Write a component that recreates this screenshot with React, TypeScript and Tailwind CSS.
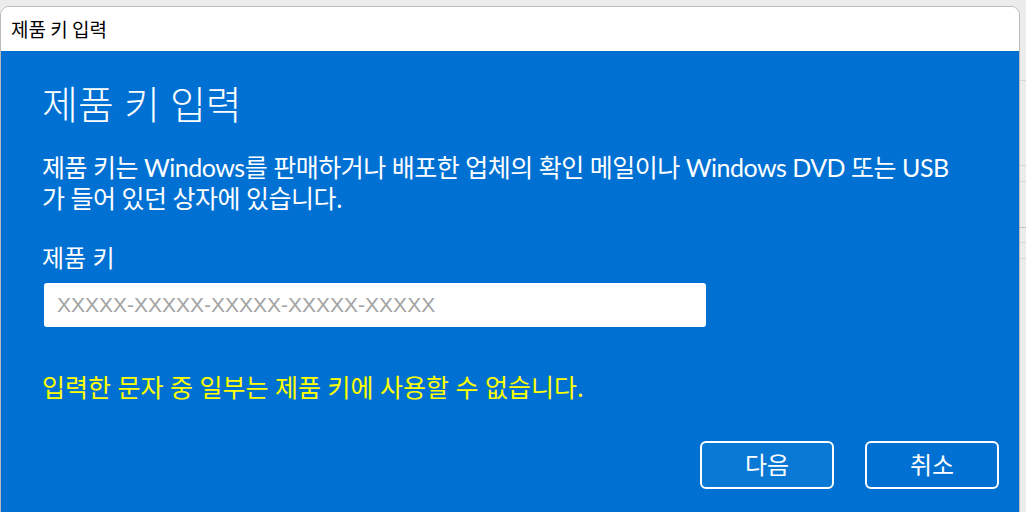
const ko = { fontFamily: '"Noto Sans", "Noto Sans CJK KR", sans-serif' };
const latin = { fontFamily: 'Lato, "Noto Sans", sans-serif' };

export default function App() {
  return (
    <div className="w-[1026px] h-[512px] overflow-hidden bg-[#ececec] pt-[6px] flex">
      <div className="w-[1020px] h-[520px] shrink-0 flex flex-col rounded-tr-[9px] rounded-tl-[9px] border border-[#b9b9b9] overflow-hidden">
        <div className="h-[44px] bg-white flex items-center pl-[10px] text-[19px] text-black" style={{ fontFamily: '"Noto Sans CJK KR", sans-serif' }}>
          제품 키 입력
        </div>
        <div className="flex-1 bg-[#0071d3] text-white pl-[41px] pr-[20px]" style={ko}>
          <h1 className="mt-[29px] text-[39px] font-light leading-[48px] whitespace-nowrap">제품 키 입력</h1>
          <p className="mt-[24px] text-[25px] leading-[31px] tracking-[-0.5px] whitespace-nowrap">
            제품 키는 <span style={latin}>Windows</span>를 판매하거나 배포한 업체의 확인 메일이나{' '}
            <span style={latin}>Windows DVD</span> 또는 <span style={latin}>USB</span>
            <br />
            가 들어 있던 상자에 있습니다.
          </p>
          <div className="mt-[29px] text-[24px] leading-[30px]">제품 키</div>
          <input
            type="text"
            placeholder="XXXXX-XXXXX-XXXXX-XXXXX-XXXXX"
            className="mt-[10px] ml-[2px] w-[662px] h-[44px] bg-white rounded-[3px] px-[13px] text-[21px] text-black placeholder:text-[#a3a3a3] outline-none"
            style={{ fontFamily: '"Liberation Sans", Arial, sans-serif' }}
          />
          <div className="mt-[45px] text-[25px] leading-[30px] text-[#ffff00] whitespace-nowrap">
            입력한 문자 중 일부는 제품 키에 사용할 수 없습니다.
          </div>
          <div className="mt-[39px] flex justify-end gap-[31px]">
            <button className="w-[134px] h-[48px] rounded-[6px] border-2 border-white bg-[#0a79d6] text-[24px] text-white">
              다음
            </button>
            <button className="w-[134px] h-[48px] rounded-[6px] border-2 border-white bg-[#0071d3] text-[24px] text-white">
              취소
            </button>
          </div>
        </div>
      </div>
      <div className="flex-1 flex flex-col">
        <div className="h-[74px]" />
        <div className="h-px bg-[#d6d6d6]" />
        <div className="h-[84px]" />
        <div className="h-px bg-[#d6d6d6]" />
        <div className="h-[15px]" />
        <div className="h-px bg-[#d9d9d9]" />
        <div className="h-[45px]" />
        <div className="h-px bg-[#c4c4c4]" />
        <div className="h-[14px]" />
        <div className="h-px bg-[#d9d9d9]" />
        <div className="h-[15px]" />
        <div className="h-px bg-[#d9d9d9]" />
      </div>
    </div>
  );
}
